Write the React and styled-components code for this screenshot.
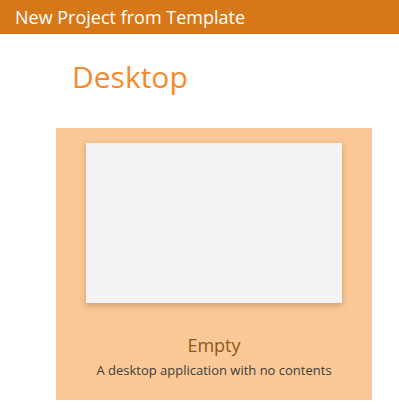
import React from "react";
import styled, { createGlobalStyle } from "styled-components";

const GlobalStyle = createGlobalStyle`
  html, body {
    margin: 0;
    padding: 0;
    background: #fff;
    font-family: "Open Sans", "Noto Sans", sans-serif;
  }
`;

const App = () => {
  return (
    <>
      <GlobalStyle />
      <Page>
        <Header>New Project from Template</Header>
        <Content>
          <Category>Desktop</Category>
          <TemplateCard>
            <Preview />
            <TemplateName>Empty</TemplateName>
            <TemplateDescription>A desktop application with no contents</TemplateDescription>
          </TemplateCard>
        </Content>
      </Page>
    </>
  );
};

export default App;

const Page = styled.div`
  width: 399px;
  height: 408px;
  overflow: hidden;
`;

const Header = styled.div`
  height: 34px;
  background-color: #d6781a;
  color: #fff;
  font-size: 18px;
  line-height: 34px;
  padding-left: 15px;
  box-sizing: border-box;
`;

const Content = styled.div`
  padding-left: 56px;
`;

const Category = styled.h1`
  margin: 0;
  padding: 23px 0 0 16px;
  height: 94px;
  box-sizing: border-box;
  font-size: 30px;
  font-weight: 400;
  line-height: 40px;
  color: #f58a2c;
`;

const TemplateCard = styled.div`
  width: 316px;
  height: 272px;
  background-color: #f9c896;
  display: flex;
  flex-direction: column;
  align-items: center;
  padding-top: 15px;
  box-sizing: border-box;
`;

const Preview = styled.div`
  width: 256px;
  height: 160px;
  background-color: #f3f3f3;
  box-shadow: 0 2px 6px rgba(120, 70, 20, 0.35);
`;

const TemplateName = styled.div`
  margin-top: 30px;
  font-size: 18px;
  line-height: 24px;
  color: #8a5a16;
`;

const TemplateDescription = styled.div`
  margin-top: 4px;
  font-size: 13px;
  line-height: 18px;
  color: #3d3d3d;
`;
